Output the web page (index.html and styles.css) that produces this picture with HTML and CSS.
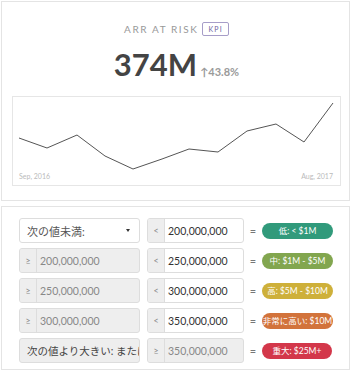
FILE: index.html
```html
<!DOCTYPE html>
<html lang="ja">
<head>
    <meta charset="utf-8" />
    <title>ARR at risk</title>
    <link rel="stylesheet" href="styles.css">
</head>
<body>
    <div class="page">
        <div class="card kpiCard">
            <div class="kpiHead">
                <span class="kpiTitle">ARR AT RISK</span>
                <span class="kpiTag">KPI</span>
            </div>
            <div class="kpiValue">
                <span class="big">374M</span>
                <span class="delta">&#8593;43.8%</span>
            </div>
            <div class="chart">
                <svg width="326" height="88" viewBox="0 0 326 88">
                    <polyline fill="none" stroke="#555" stroke-width="1"
                        points="6,41 34,51 64,38 92,59 120,72 149,62 176,52 205,55 234,34 263,27 291,45 320,6" />
                    <text x="6" y="82" class="axis">Sep, 2016</text>
                    <text x="320" y="82" class="axis" text-anchor="end">Aug, 2017</text>
                </svg>
            </div>
        </div>

        <div class="card rangeCard">
            <!-- 1행 -->
            <div class="row">
                <div class="select">
                    <span>次の値未満:</span>
                    <span class="caret"></span>
                </div>
                <div class="group">
                    <span class="addon">&lt;</span>
                    <span class="field">200,000,000</span>
                </div>
                <span class="eq">=</span>
                <span class="badge low">低: &lt; $1M</span>
            </div>
            <!-- 2행 -->
            <div class="row">
                <div class="group wide off">
                    <span class="addon">&ge;</span>
                    <span class="field">200,000,000</span>
                </div>
                <div class="group">
                    <span class="addon">&lt;</span>
                    <span class="field">250,000,000</span>
                </div>
                <span class="eq">=</span>
                <span class="badge mid">中: $1M - $5M</span>
            </div>
            <!-- 3행 -->
            <div class="row">
                <div class="group wide off">
                    <span class="addon">&ge;</span>
                    <span class="field">250,000,000</span>
                </div>
                <div class="group">
                    <span class="addon">&lt;</span>
                    <span class="field">300,000,000</span>
                </div>
                <span class="eq">=</span>
                <span class="badge high">高: $5M - $10M</span>
            </div>
            <!-- 4행 -->
            <div class="row">
                <div class="group wide off">
                    <span class="addon">&ge;</span>
                    <span class="field">300,000,000</span>
                </div>
                <div class="group">
                    <span class="addon">&lt;</span>
                    <span class="field">350,000,000</span>
                </div>
                <span class="eq">=</span>
                <span class="badge vhigh">非常に高い: $10M</span>
            </div>
            <!-- 5행 -->
            <div class="row">
                <div class="select off">
                    <span class="clip">次の値より大きい: または</span>
                </div>
                <div class="group off">
                    <span class="addon">&ge;</span>
                    <span class="field">350,000,000</span>
                </div>
                <span class="eq">=</span>
                <span class="badge crit">重大: $25M+</span>
            </div>
        </div>
    </div>
</body>
</html>
```

FILE: styles.css
```css
body {
    margin: 0;
    padding: 0;
    background: #fff;
    font-family: Lato, "Noto Sans CJK JP", sans-serif;
    color: #333;
}

.page {
    width: 349px;
    padding: 1px 0 0 1px;
}

.card {
    border: 1px solid #e4e4e4;
    background: #fff;
}

.kpiCard {
    padding: 20px 8px 14px 10px;
}

.kpiHead {
    display: flex;
    justify-content: center;
    align-items: center;
    height: 13px;
}

.kpiTitle {
    font-size: 10px;
    letter-spacing: 1.6px;
    color: #999;
}

.kpiTag {
    margin-left: 3px;
    padding: 0 5px 0 6px;
    height: 12px;
    line-height: 12px;
    border: 1px solid #a69dc8;
    border-radius: 2px;
    font-size: 7px;
    letter-spacing: 1.2px;
    color: #6e64a0;
}

.kpiValue {
    margin-top: 13px;
    display: flex;
    justify-content: center;
    align-items: baseline;
    line-height: 32px;
    height: 32px;
}

.kpiValue .big {
    font-size: 31px;
    font-weight: 700;
    color: #444;
}

.kpiValue .delta {
    margin-left: 3px;
    font-size: 11px;
    font-weight: 700;
    color: #9a9a9a;
}

.chart {
    margin-top: 16px;
    height: 88px;
    border: 1px solid #e6e6e6;
}

.chart svg {
    display: block;
}

.axis {
    font-family: Lato, sans-serif;
    font-size: 7px;
    fill: #bbb;
}

.rangeCard {
    margin-top: 5px;
    padding: 11px 0 6px 17px;
}

.row {
    display: flex;
    align-items: center;
    height: 25px;
    margin-bottom: 5px;
}

.row:last-child {
    margin-bottom: 0;
}

.select {
    box-sizing: border-box;
    width: 121px;
    height: 25px;
    margin-right: 7px;
    padding: 0 9px 0 7px;
    display: flex;
    align-items: center;
    justify-content: space-between;
    border: 1px solid #ddd;
    border-radius: 3px;
    font-size: 11px;
    color: #555;
    overflow: hidden;
    white-space: nowrap;
}

.select.off {
    background: #eee;
    padding-right: 0;
    font-size: 10.5px;
    color: #444;
}

.caret {
    width: 0;
    height: 0;
    border-left: 2px solid transparent;
    border-right: 2px solid transparent;
    border-top: 3px solid #333;
}

.group {
    box-sizing: border-box;
    width: 97px;
    height: 25px;
    display: flex;
    border: 1px solid #ddd;
    border-radius: 3px;
    overflow: hidden;
    background: #fff;
}

.group.wide {
    width: 121px;
    margin-right: 7px;
}

.addon {
    width: 16px;
    flex: none;
    display: flex;
    align-items: center;
    justify-content: center;
    background: #eee;
    border-right: 1px solid #ddd;
    font-size: 9px;
    color: #888;
}

.field {
    flex: 1;
    display: flex;
    align-items: center;
    padding-left: 3px;
    font-size: 10.5px;
    color: #333;
    white-space: nowrap;
}

.group.off {
    background: #eee;
}

.group.off .field {
    color: #888;
}

.eq {
    width: 18px;
    text-align: center;
    font-size: 11px;
    color: #777;
}

.badge {
    box-sizing: border-box;
    width: 71px;
    height: 16px;
    line-height: 16px;
    border-radius: 8px;
    text-align: center;
    font-size: 8.5px;
    color: #fff;
    white-space: nowrap;
    overflow: hidden;
}

.low { background: #319a7b; }
.mid { background: #82a64f; }
.high { background: #ceb03a; }
.vhigh { background: #d2733b; }
.crit { background: #d3374a; width: 70px; }
```
